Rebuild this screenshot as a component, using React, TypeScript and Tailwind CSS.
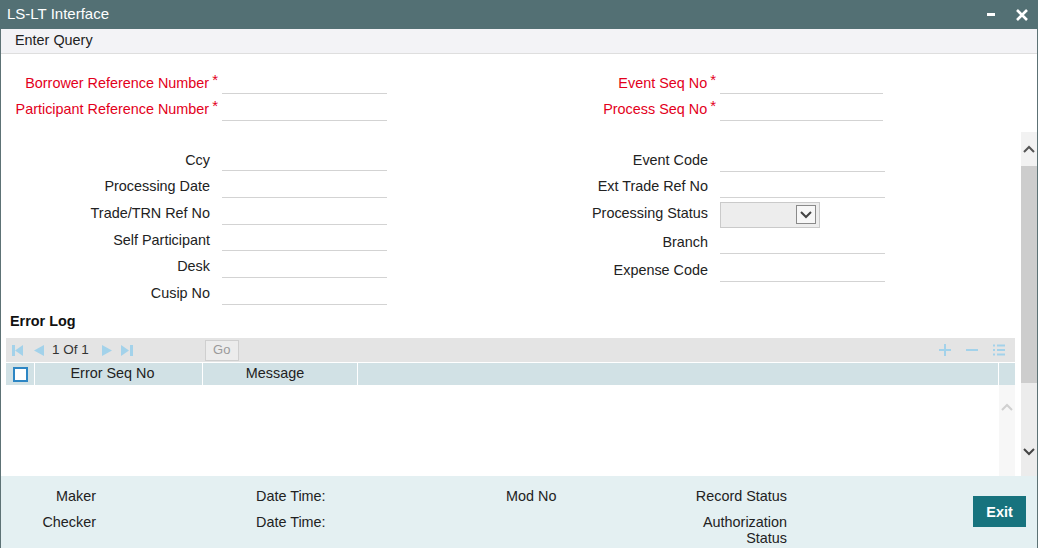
import React from "react";

const font = { fontFamily: '"Liberation Sans", Arial, sans-serif' };

function Field({ label, labelW, inputW = 165, required = false, rowH = "h-[26.7px]" }: { label: string; labelW: number; inputW?: number; required?: boolean; rowH?: string }) {
  return (
    <div className={`flex items-center ${rowH}`}>
      <div className={`whitespace-nowrap text-right ${required ? "text-[#e3001b]" : "text-[#222]"}`} style={{ width: labelW }}>
        {label}
        {required && <span className="relative -top-[3px] ml-[3px] text-[15px] text-[#e3001b]">*</span>}
      </div>
      <div className={`h-[22px] border-b border-[#d3d3d3] ${required ? "ml-[4px]" : "ml-[12px]"}`} style={{ width: inputW }} />
    </div>
  );
}

function Chevron({ up, className }: { up?: boolean; className?: string }) {
  return (
    <svg width="12" height="8" viewBox="0 0 12 8" className={className}>
      <path d={up ? "M1 7 L6 2 L11 7" : "M1 1 L6 6 L11 1"} fill="none" stroke="currentColor" strokeWidth="2" />
    </svg>
  );
}

function Pager() {
  const c = "#a3d2ea";
  return (
    <div className="flex items-center">
      <svg width="11" height="11" viewBox="0 0 11 11" className="ml-[6px]">
        <rect x="0" y="0" width="3" height="11" fill={c} />
        <path d="M11 0 L3 5.5 L11 11 Z" fill={c} />
      </svg>
      <svg width="11" height="11" viewBox="0 0 11 11" className="ml-[10px]">
        <path d="M11 0 L1 5.5 L11 11 Z" fill={c} />
      </svg>
      <span className="ml-[8px] text-[13.5px] text-[#333]">1 Of 1</span>
      <svg width="11" height="11" viewBox="0 0 11 11" className="ml-[13px]">
        <path d="M0 0 L10 5.5 L0 11 Z" fill={c} />
      </svg>
      <svg width="12" height="11" viewBox="0 0 12 11" className="ml-[8px]">
        <path d="M0 0 L8 5.5 L0 11 Z" fill={c} />
        <rect x="9" y="0" width="3" height="11" fill={c} />
      </svg>
      <div className="ml-[72px] flex h-[21px] w-[34px] items-center justify-center border border-[#cfcfcf] bg-[#ececec] text-[13px] text-[#9a9a9a]">Go</div>
    </div>
  );
}

export default function App() {
  return (
    <div className="flex h-[548px] w-[1038px] flex-col overflow-hidden bg-white text-[14.4px]" style={font}>
      {/* title bar */}
      <div className="flex h-[29px] shrink-0 items-center bg-[#537074] pl-[7px] pr-[10px] text-white">
        <span className="text-[15px]">LS-LT Interface</span>
        <div className="ml-auto flex items-center">
          <div className="h-[3px] w-[8px] bg-white" />
          <svg width="12" height="12" viewBox="0 0 12 12" className="ml-[21px]">
            <path d="M1 1 L11 11 M11 1 L1 11" stroke="white" strokeWidth="2.6" />
          </svg>
        </div>
      </div>

      <div className="flex min-h-0 flex-1 flex-col border-x border-[#5d7275]">
        {/* toolbar */}
        <div className="flex h-[25px] shrink-0 items-center border-b border-[#dedede] bg-[#f3f3f6] pl-[14px] text-[#222]">Enter Query</div>

        {/* required fields */}
        <div className="flex h-[78px] shrink-0 pt-[16px]">
          <div className="w-[519px]">
            <Field label="Borrower Reference Number" labelW={217} inputW={165} required rowH="h-[26px]" />
            <Field label="Participant Reference Number" labelW={217} inputW={165} required rowH="h-[27px]" />
          </div>
          <div>
            <Field label="Event Seq No" labelW={196} inputW={163} required rowH="h-[26px]" />
            <Field label="Process Seq No" labelW={196} inputW={163} required rowH="h-[27px]" />
          </div>
        </div>

        {/* scrolling body */}
        <div className="flex min-h-0 flex-1">
          <div className="flex min-w-0 flex-1 flex-col overflow-hidden pt-[15px]">
            <div className="flex">
              <div className="w-[519px]">
                <Field label="Ccy" labelW={209} />
                <Field label="Processing Date" labelW={209} />
                <Field label="Trade/TRN Ref No" labelW={209} />
                <Field label="Self Participant" labelW={209} />
                <Field label="Desk" labelW={209} />
                <Field label="Cusip No" labelW={209} />
              </div>
              <div>
                <Field label="Event Code" labelW={188} rowH="h-[27px]" />
                <Field label="Ext Trade Ref No" labelW={188} rowH="h-[26px]" />
                <div className="flex h-[29px] items-center">
                  <div className="w-[188px] pb-[2px] text-right text-[#222]">Processing Status</div>
                  <div className="ml-[12px] flex h-[26px] w-[100px] items-center justify-end border border-[#cacaca] bg-[#ededed] pr-[3px]">
                    <div className="flex h-[19px] w-[20px] items-center justify-center border border-[#8a8a8a] bg-[#f7f7f7] text-[#444]">
                      <Chevron />
                    </div>
                  </div>
                </div>
                <Field label="Branch" labelW={188} rowH="h-[28px]" />
                <Field label="Expense Code" labelW={188} rowH="h-[27px]" />
              </div>
            </div>

            <div className="mt-[5px] flex h-[20px] items-center pl-[9px] font-bold text-[#111]">Error Log</div>

            <div className="ml-[5px] mr-[6px] mt-[6px]">
              <div className="flex h-[24px] items-center bg-[#e4e4e4]">
                <Pager />
                <div className="ml-auto flex items-center gap-[15px] pr-[10px] text-[#a3d2ea]">
                  <svg width="12" height="12" viewBox="0 0 12 12">
                    <path d="M6 0 V12 M0 6 H12" stroke="currentColor" strokeWidth="2" />
                  </svg>
                  <svg width="12" height="12" viewBox="0 0 12 12">
                    <path d="M0 6 H12" stroke="currentColor" strokeWidth="2" />
                  </svg>
                  <svg width="12" height="12" viewBox="0 0 12 12">
                    <path d="M0 1.5 H2 M4 1.5 H12 M0 6 H2 M4 6 H12 M0 10.5 H2 M4 10.5 H12" stroke="currentColor" strokeWidth="2" />
                  </svg>
                </div>
              </div>
              <div className="mt-px flex h-[22px] items-stretch bg-[#d1e1e5] text-[#222]">
                <div className="flex w-[29px] items-center justify-center border-r border-white">
                  <div className="h-[15px] w-[15px] border-2 border-[#2d86c4] bg-white" />
                </div>
                <div className="flex w-[168px] items-center justify-center border-r border-white pr-[12px]">Error Seq No</div>
                <div className="flex w-[155px] items-center justify-center border-r border-white pr-[10px]">Message</div>
                <div className="flex-1 border-r border-white" />
                <div className="w-[16px]" />
              </div>
              <div className="flex h-[100px]">
                <div className="flex-1" />
                <div className="flex w-[16px] justify-center bg-[#f7f7f7] pt-[18px] text-[#d0d0d0]">
                  <Chevron up />
                </div>
              </div>
            </div>
          </div>

          {/* outer scrollbar */}
          <div className="flex w-[16px] shrink-0 flex-col bg-[#ececec]">
            <div className="flex h-[34px] items-center justify-center bg-[#f2f2f2] text-[#555]">
              <Chevron up />
            </div>
            <div className="h-[217px] bg-[#cdcdcd]" />
            <div className="flex flex-1 items-start justify-center pt-[65px] text-[#444]">
              <Chevron />
            </div>
          </div>
        </div>

        {/* footer */}
        <div className="flex h-[72px] shrink-0 bg-[#e4f0f2] pt-[12px] leading-[16px] text-[#222]">
          <div className="flex w-[95px] flex-col gap-[10px] text-right">
            <span>Maker</span>
            <span>Checker</span>
          </div>
          <div className="ml-[160px] flex w-[250px] flex-col gap-[10px]">
            <span>Date Time:</span>
            <span>Date Time:</span>
          </div>
          <div className="w-[180px]">Mod No</div>
          <div className="flex w-[101px] flex-col gap-[10px] text-right">
            <span>Record Status</span>
            <span>Authorization Status</span>
          </div>
          <div className="ml-auto mr-[11px] mt-[8px] flex h-[31px] w-[53px] items-center justify-center bg-[#17737e] font-bold text-white">Exit</div>
        </div>
      </div>
    </div>
  );
}
